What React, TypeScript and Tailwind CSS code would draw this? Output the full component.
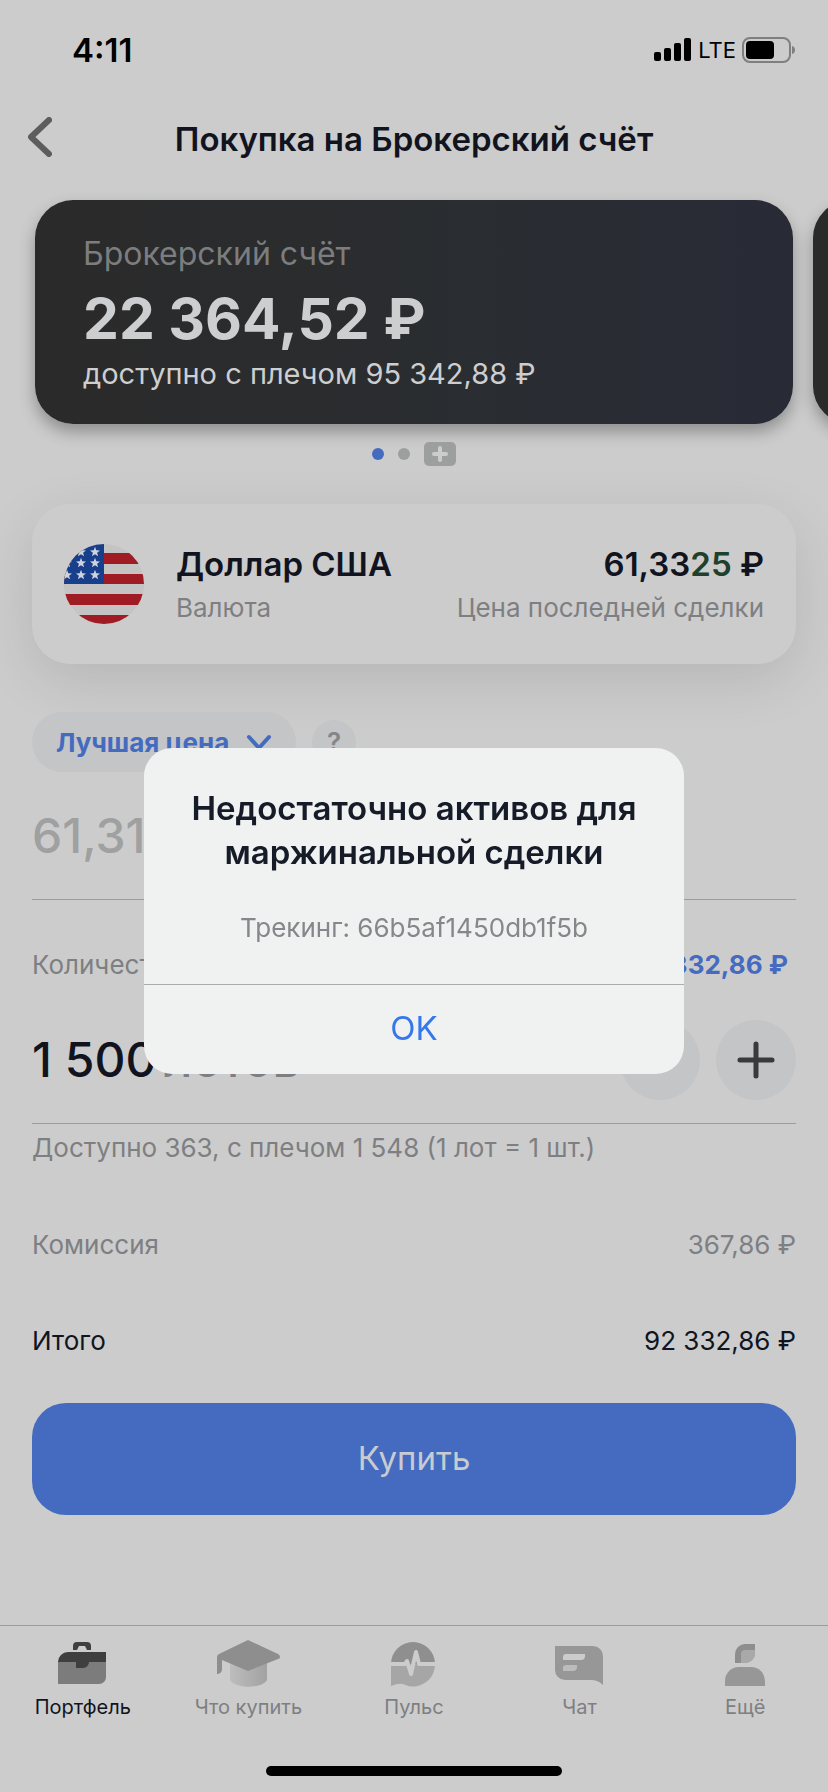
import { useState } from "react";
import type { ReactNode } from "react";

const STAR = "M0-5.2 1.3-1.7 5-1.6 2.1.7 3.1 4.3 0 2.2-3.1 4.3-2.1.7-5-1.6-1.3-1.7Z";

const STARS = [
  [17, 8],
  [31, 8],
  [3, 19],
  [17, 19],
  [31, 19],
  [3, 31],
  [17, 31],
  [31, 31],
];

function UsFlag() {
  return (
    <svg viewBox="0 0 80 80" className="size-20 shrink-0" aria-hidden="true">
      <clipPath id="flag">
        <circle cx="40" cy="40" r="40" />
      </clipPath>
      <g clipPath="url(#flag)">
        <rect width="80" height="80" fill="#c4c4c4" />
        {[9, 30, 50, 71].map((y) => (
          <rect key={y} y={y} width="80" height="11" fill="#9f1c25" />
        ))}
        <rect y="40" width="80" height="10" fill="#c4c4c4" />
        <rect width="40" height="40" fill="#173f8c" />
        {STARS.map(([x, y]) => (
          <path key={`${x}-${y}`} d={STAR} transform={`translate(${x} ${y})`} fill="#cfd3dc" />
        ))}
      </g>
    </svg>
  );
}

function StatusBar() {
  return (
    <div className="flex h-[100px] items-center justify-between pr-8 pl-[72px] text-black">
      <span className="text-[33px] leading-10 font-semibold">4:11</span>
      <div className="flex items-center gap-[6px]">
        <svg width="38" height="24" viewBox="0 0 38 24" aria-hidden="true">
          <rect x="0" y="14" width="7" height="9" rx="2" />
          <rect x="10" y="10" width="7" height="13" rx="2" />
          <rect x="20" y="5" width="7" height="18" rx="2" />
          <rect x="30" y="0" width="7" height="23" rx="2" />
        </svg>
        <span className="text-[22px] leading-8">LTE</span>
        <svg width="54" height="26" viewBox="0 0 54 26" aria-hidden="true">
          <rect x="1" y="1" width="47" height="24" rx="7" fill="none" stroke="#7f7f7f" strokeWidth="2" />
          <rect x="4" y="4" width="28" height="18" rx="4" />
          <path d="M50 9c2 .5 3 2 3 4s-1 3.500-3 4z" fill="#7f7f7f" />
        </svg>
      </div>
    </div>
  );
}

function Row({ label, value, className }: { label: string; value: string; className: string }) {
  return (
    <div className={`mt-14 flex h-10 items-center justify-between text-[26px] ${className}`}>
      <dt>{label}</dt>
      <dd>{value}</dd>
    </div>
  );
}

const TABS: { label: string; icon: ReactNode }[] = [
  {
    label: "Портфель",
    icon: (
      <>
        <path d="M8 19H56V35a7 7 0 0 1-7 7H8Z" fill="#7c7c7c" />
        <path d="M8 20a10 10 0 0 1 10-10H56V20H39a6 6 0 0 1-6 6H26V20Z" fill="#3f3f3f" />
        <path d="M23 8V4a4 4 0 0 1 4-4H37a4 4 0 0 1 4 4V8H37L35 4H29L27 8Z" fill="#3f3f3f" />
      </>
    ),
  },
  {
    label: "Что купить",
    icon: (
      <>
        <defs>
          <linearGradient id="cap">
            <stop stopColor="#bdbdbd" />
            <stop offset="1" stopColor="#a2a2a2" />
          </linearGradient>
        </defs>
        <path d="M15 18H52V38C47 47 20 47 15 38Z" fill="url(#cap)" />
        <path
          d="M33-2 63 12Q65 13 65 15T63 17L33 29 7 18V28Q6 32 2 32V15Q2 13 4 12Z"
          fill="#8e8e8e"
        />
      </>
    ),
  },
  {
    label: "Пульс",
    icon: (
      <>
        <path d="M10 22A22 22 0 0 1 54 22Z" fill="#8f8f8f" />
        <path d="M10 22H54A22 22 0 0 1 22 42Q17 41 10 44Z" fill="#a6a6a6" />
        <path
          d="M9 22H24L26 19 30 32 35 10 38 22H55"
          fill="none"
          stroke="#cccccc"
          strokeWidth="4"
          strokeLinejoin="round"
        />
      </>
    ),
  },
  {
    label: "Чат",
    icon: (
      <>
        <path d="M8 4H46A10 10 0 0 1 56 14V43Q51 38 44 38H18A10 10 0 0 1 8 28Z" fill="#979797" />
        <path d="M16 18V15a3 3 0 0 1 3-3H38V14a4 4 0 0 1-4 4Z" fill="#cccccc" />
        <path d="M16 29V26a3 3 0 0 1 3-3H30V25a4 4 0 0 1-4 4Z" fill="#bcbcbc" />
      </>
    ),
  },
  {
    label: "Ещё",
    icon: (
      <>
        <path d="M23 21V12A10 10 0 0 1 33 2H43V11A10 10 0 0 1 33 21Z" fill="#8e8e8e" />
        <path d="M29 21V12a4 4 0 0 1 4-4H43V11A10 10 0 0 1 33 21Z" fill="#a9a9a9" />
        <path d="M13 44V39A14 14 0 0 1 27 25H39A14 14 0 0 1 53 39V44Z" fill="#979797" />
      </>
    ),
  },
];

function TabBar() {
  return (
    <footer className="mt-auto border-t border-[#9c9c9c] pt-3">
      <nav className="grid grid-cols-5">
        {TABS.map((tab, i) => (
          <a
            key={tab.label}
            href="#"
            className={`flex flex-col items-center gap-[7px] text-[20px] leading-6 ${
              i === 0 ? "text-[#11141f]" : "text-[#7e7f82]"
            }`}
          >
            <svg viewBox="0 -4 66 50" className="h-[50px] w-[66px]" aria-hidden="true">
              {tab.icon}
            </svg>
            {tab.label}
          </a>
        ))}
      </nav>
      <div className="mx-auto mt-[47px] mb-4 h-[10px] w-[296px] rounded-full bg-black" />
    </footer>
  );
}

function ErrorDialog({ onClose }: { onClose: () => void }) {
  return (
    <div className="fixed inset-0 flex items-center justify-center pt-[29px]">
      <div
        role="alertdialog"
        aria-labelledby="alert-title"
        aria-describedby="alert-text"
        className="w-[540px] overflow-hidden rounded-[28px] bg-[#f0f1f1] text-center"
      >
        <div className="px-10 pt-[38px] pb-10">
          <h2 id="alert-title" className="text-[33px] leading-[44px] font-semibold text-[#161b28]">
            Недостаточно активов для маржинальной сделки
          </h2>
          <p id="alert-text" className="mt-[38px] text-[26px] leading-8 text-[#86878a]">
            Трекинг: 66b5af1450db1f5b
          </p>
        </div>
        <button
          onClick={onClose}
          className="h-[90px] w-full border-t border-[#a9acaf] text-[33px] text-[#3478ec]"
        >
          OK
        </button>
      </div>
    </div>
  );
}

export default function App() {
  const [price, setPrice] = useState("61,31");
  const [lots, setLots] = useState("1 500");
  const [open, setOpen] = useState(true);

  return (
    <div className="flex min-h-screen flex-col overflow-hidden bg-[#cccccc] font-['Inter','Liberation_Sans',sans-serif] text-[#11141f]">
      <StatusBar />

      <header className="grid h-20 grid-cols-[80px_1fr_80px] items-center">
        <button aria-label="Назад" className="pb-[6px] pl-7">
          <svg width="24" height="40" viewBox="0 0 24 40" fill="none" aria-hidden="true">
            <path
              d="M21 3 3 20 21 37"
              stroke="#5d5d5d"
              strokeWidth="6"
              strokeLinecap="round"
              strokeLinejoin="round"
            />
          </svg>
        </button>
        <h1 className="text-center text-[33px] font-semibold whitespace-nowrap">
          Покупка на Брокерский счёт
        </h1>
      </header>

      {/* Account carousel */}
      <div className="flex gap-5 pt-5 pl-[35px]">
        <section className="h-56 w-[calc(100%-35px)] shrink-0 rounded-[38px] bg-linear-to-r from-[#2a2a2a] via-[#2a2d30] to-[#282b36] pt-8 pl-12 shadow-[0_8px_16px_rgba(0,0,0,0.3)]">
          <p className="text-[32px] leading-[44px] text-[#7c7d7e]">Брокерский счёт</p>
          <p className="mt-[10px] text-[57px] leading-[66px] font-bold text-[#cdced0]">
            22 364,52 ₽
          </p>
          <p className="text-[29px] leading-[44px] text-[#cdced0]">
            доступно с плечом 95 342,88 ₽
          </p>
        </section>
        <section className="h-56 w-[calc(100%-35px)] shrink-0 rounded-[38px] bg-[#2a2a2a] shadow-[0_8px_16px_rgba(0,0,0,0.3)]" />
      </div>
      <div className="mt-[18px] flex h-6 items-center justify-center gap-[14px]">
        <span className="size-3 rounded-full bg-[#446bbf]" />
        <span className="size-3 rounded-full bg-[#9d9e9e]" />
        <button
          aria-label="Открыть счёт"
          className="grid h-6 w-8 place-items-center rounded-[5px] bg-[#9d9e9e]"
        >
          <svg width="16" height="16" viewBox="0 0 16 16" stroke="#cccccc" strokeWidth="4" strokeLinecap="round">
            <path d="M8 2V14M2 8H14" />
          </svg>
        </button>
      </div>

      <main className="flex flex-col px-8">
        <section className="mt-[38px] flex h-40 items-center rounded-[38px] bg-[#cccccc] px-8 shadow-[0_16px_56px_rgba(0,0,0,0.11)]">
          <UsFlag />
          <div className="ml-8">
            <h2 className="text-[33px] leading-[48px] font-semibold">Доллар США</h2>
            <p className="text-[26px] leading-10 text-[#7e7f82]">Валюта</p>
          </div>
          <div className="ml-auto text-right">
            <p className="text-[33px] leading-[48px] font-semibold">
              61,33<span className="text-[#1f402c]">25</span> ₽
            </p>
            <p className="text-[26px] leading-10 text-[#7e7f82]">Цена последней сделки</p>
          </div>
        </section>

        <div className="mt-12 flex items-center gap-4">
          <div className="relative">
            <select
              aria-label="Тип заявки"
              className="h-[60px] w-[264px] appearance-none rounded-full bg-[#c3c5c7] pl-6 text-[26px] font-bold text-[#446bbf] outline-none"
            >
              <option>Лучшая цена</option>
            </select>
            <svg
              width="26"
              height="18"
              viewBox="0 0 26 18"
              fill="none"
              className="pointer-events-none absolute top-[22px] right-6"
              aria-hidden="true"
            >
              <path
                d="M3 3 13 14 23 3"
                stroke="#446bbf"
                strokeWidth="4"
                strokeLinecap="round"
                strokeLinejoin="round"
              />
            </svg>
          </div>
          <button
            aria-label="Справка"
            className="size-11 rounded-full bg-[#c3c5c7] text-[26px] leading-[44px] font-semibold text-[#858687]"
          >
            ?
          </button>
        </div>

        <div className="mt-8 border-b border-[#9c9c9c] pb-[31px]">
          <input
            aria-label="Цена"
            value={price}
            onChange={(e) => setPrice(e.target.value)}
            className="h-16 w-full bg-transparent text-[48px] font-medium text-[#9fa0a0] outline-none"
          />
        </div>

        <div className="mt-11 flex h-10 items-center justify-between text-[26px]">
          <label htmlFor="lots" className="text-[#7e7f82]">
            Количество
          </label>
          <button className="pr-2 font-bold text-[#446bbf]">92 332,86 ₽</button>
        </div>

        <div className="mt-9 flex items-center border-b border-[#9c9c9c] pb-[23px]">
          <input
            id="lots"
            value={lots}
            onChange={(e) => setLots(e.target.value)}
            className="field-sizing-content bg-transparent text-[48px] font-medium outline-none"
          />
          <span className="ml-2 text-[48px] font-medium text-[#7e7f82]">лотов</span>
          <button aria-label="Меньше" className="ml-auto grid size-20 place-items-center rounded-full bg-[#c3c5c7]">
            <svg width="38" height="38" viewBox="0 0 38 38" stroke="#3a3a3a" strokeWidth="5" strokeLinecap="round">
              <path d="M3 19H35" />
            </svg>
          </button>
          <button aria-label="Больше" className="ml-4 grid size-20 place-items-center rounded-full bg-[#c3c5c7]">
            <svg width="38" height="38" viewBox="0 0 38 38" stroke="#3a3a3a" strokeWidth="5" strokeLinecap="round">
              <path d="M19 3V35M3 19H35" />
            </svg>
          </button>
        </div>
        <p className="mt-1 text-[26px] leading-10 text-[#7e7f82]">
          Доступно 363, с плечом 1 548 (1 лот = 1 шт.)
        </p>

        <dl>
          <Row label="Комиссия" value="367,86 ₽" className="text-[#7e7f82]" />
          <Row label="Итого" value="92 332,86 ₽" className="text-[#11141f]" />
        </dl>

        <button className="mt-[43px] h-28 rounded-[34px] bg-[#446bbf] text-[33px] text-[#c8cbd1]">
          Купить
        </button>
      </main>

      <TabBar />

      {open && <ErrorDialog onClose={() => setOpen(false)} />}
    </div>
  );
}
